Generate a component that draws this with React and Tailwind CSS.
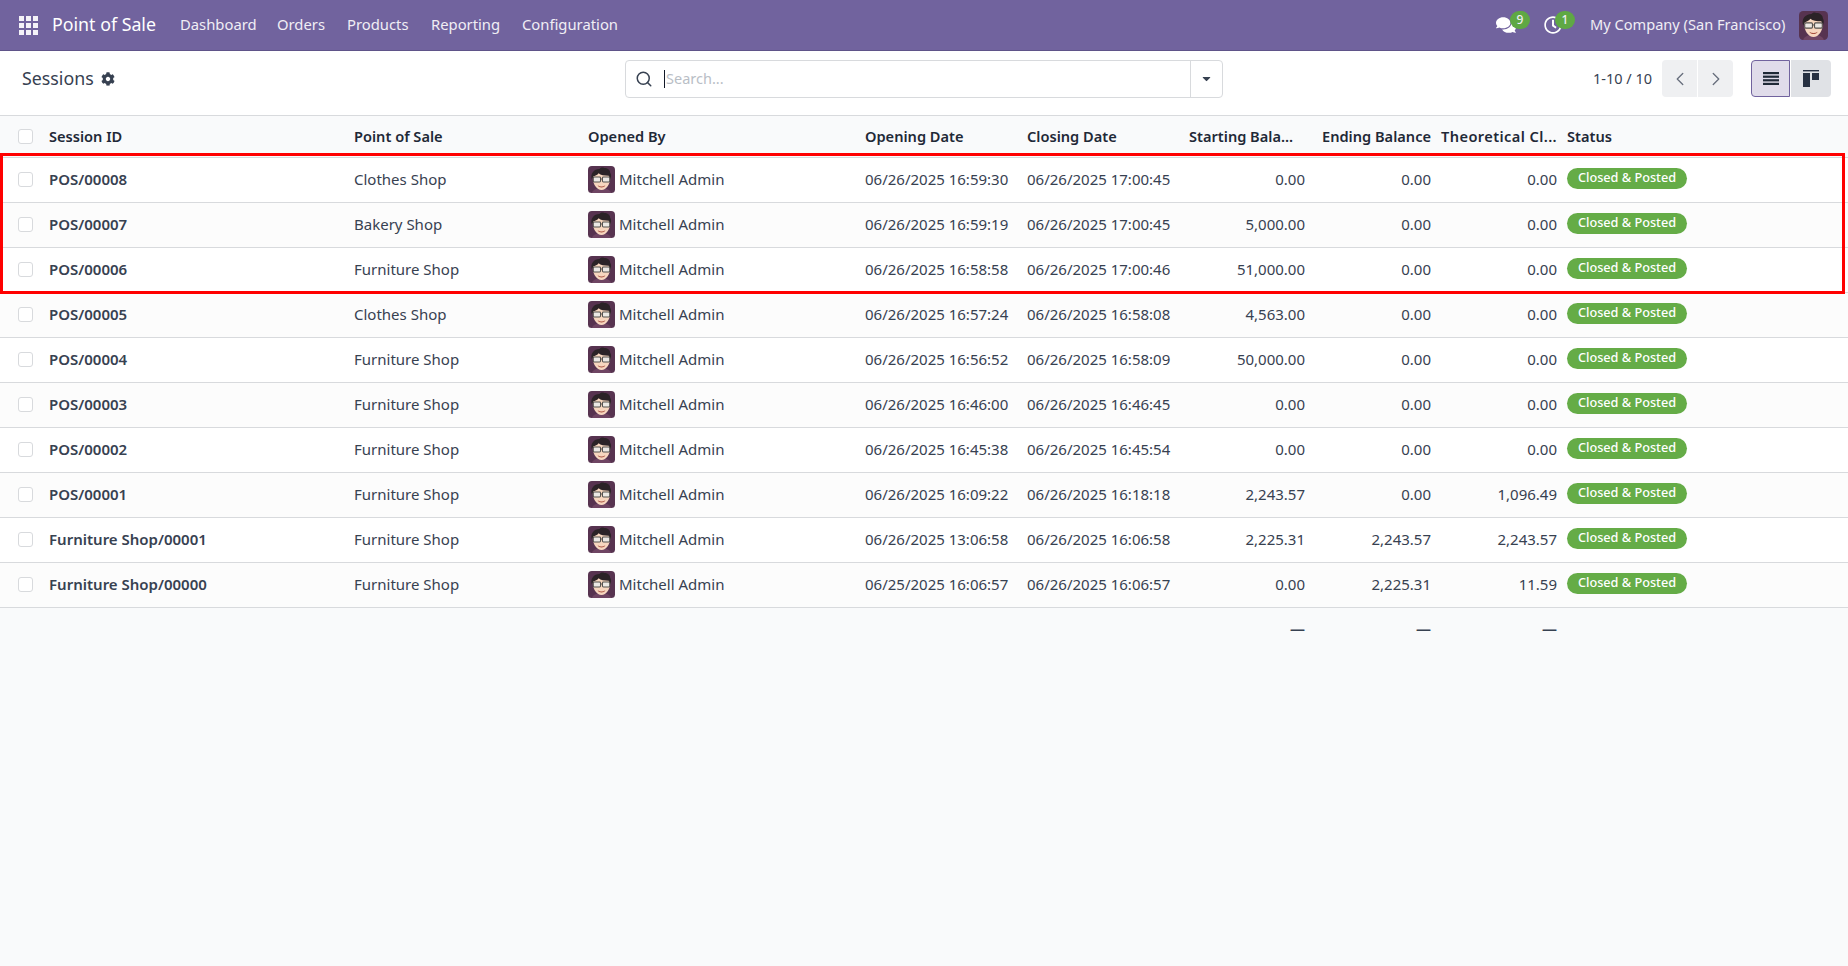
import { ChevronLeft, ChevronRight, Search } from "lucide-react"
import { FaCaretDown, FaCog, FaComments, FaRegClock } from "react-icons/fa"

const rows = [
  ["POS/00008", "Clothes Shop", "06/26/2025 16:59:30", "06/26/2025 17:00:45", "0.00", "0.00", "0.00"],
  ["POS/00007", "Bakery Shop", "06/26/2025 16:59:19", "06/26/2025 17:00:45", "5,000.00", "0.00", "0.00"],
  ["POS/00006", "Furniture Shop", "06/26/2025 16:58:58", "06/26/2025 17:00:46", "51,000.00", "0.00", "0.00"],
  ["POS/00005", "Clothes Shop", "06/26/2025 16:57:24", "06/26/2025 16:58:08", "4,563.00", "0.00", "0.00"],
  ["POS/00004", "Furniture Shop", "06/26/2025 16:56:52", "06/26/2025 16:58:09", "50,000.00", "0.00", "0.00"],
  ["POS/00003", "Furniture Shop", "06/26/2025 16:46:00", "06/26/2025 16:46:45", "0.00", "0.00", "0.00"],
  ["POS/00002", "Furniture Shop", "06/26/2025 16:45:38", "06/26/2025 16:45:54", "0.00", "0.00", "0.00"],
  ["POS/00001", "Furniture Shop", "06/26/2025 16:09:22", "06/26/2025 16:18:18", "2,243.57", "0.00", "1,096.49"],
  ["Furniture Shop/00001", "Furniture Shop", "06/26/2025 13:06:58", "06/26/2025 16:06:58", "2,225.31", "2,243.57", "2,243.57"],
  ["Furniture Shop/00000", "Furniture Shop", "06/25/2025 16:06:57", "06/26/2025 16:06:57", "0.00", "2,225.31", "11.59"],
]

const menu = ["Dashboard", "Orders", "Products", "Reporting", "Configuration"]

function Avatar({ className }) {
  return (
    <svg viewBox="0 0 28 28" className={className}>
      <rect width="28" height="28" rx="4" fill="#573350" />
      <path d="M4 28c1-3 4-5 10-5s9 2 10 5z" fill="#6f4563" />
      <path d="M5 12c0-4 4-6 9-6s9 2 9 6c0 7-4 13-9 13S5 19 5 12z" fill="#f7d6bf" />
      <path d="M4 14C2 8 6 3 12 3c1-1.500 3-2 5-1 3 0 6 2 6 5 1.500 2 1 5 0 7l-1.500-4C17 10 13 9.500 11 7.500 10 9.500 7 10 5.500 11z" fill="#2b2327" />
      <rect x="5.500" y="11.500" width="7.500" height="5" rx="1" fill="#ece8e4" stroke="#55524f" strokeWidth="1.100" />
      <rect x="15" y="11.500" width="7.500" height="5" rx="1" fill="#ece8e4" stroke="#55524f" strokeWidth="1.100" />
      <path d="M13 13.500h2" stroke="#55524f" strokeWidth="1" />
      <path d="M10 20c2.500 1.800 5.500 1.800 8 0-1 3-7 3-8 0z" fill="#a8503f" />
    </svg>
  )
}

function Checkbox() {
  return <div className="w-[15px] h-[15px] rounded-[3px] border border-[#d8dadd] bg-white" />
}

export default function App() {
  return (
    <div className="h-screen bg-[#f9fafb] text-[#374151] text-[15px] font-['Noto_Sans',sans-serif] overflow-hidden">
      <nav className="h-[51px] bg-[#71639e] border-b border-[#5f5389] flex items-center text-white">
        <div className="grid grid-cols-3 gap-[2px] w-[19px] h-[19px] ml-[19px]">
          {Array.from({ length: 9 }).map((_, i) => <div key={i} className="bg-[#f4f2f8]" />)}
        </div>
        <span className="ml-[14px] text-[17.8px] w-[128px] pb-[1px]">Point of Sale</span>
        <div className="flex text-[#f0eef5] text-[14.8px] pb-[2px]">
          {menu.map((m, i) => (
            <a key={i} className={["w-[97px]", "w-[70px]", "w-[84px]", "w-[91px]", "w-[100px]"][i]}>{m}</a>
          ))}
        </div>
        <div className="ml-auto flex items-center text-[#f0eef5] text-[14.6px]">
          <div className="relative w-[48px] h-[30px] flex items-center">
            <FaComments className="w-[20px] h-[20px] text-white" />
            <span className="absolute left-[14px] top-[1px] w-[20px] h-[18px] rounded-full bg-[#5fa844] text-[12px] font-medium flex items-center justify-center">9</span>
          </div>
          <div className="relative w-[46px] h-[30px] flex items-center">
            <FaRegClock className="w-[18px] h-[18px] text-white" />
            <span className="absolute left-[11px] top-[1px] w-[20px] h-[18px] rounded-full bg-[#5fa844] text-[12px] font-medium flex items-center justify-center">1</span>
          </div>
          <span className="w-[209px] pb-[1px]">My Company (San Francisco)</span>
          <Avatar className="w-[29px] h-[29px] mr-[20px]" />
        </div>
      </nav>

      <div className="h-[65px] bg-white border-b border-[#d8dadd] flex items-center pb-[9px] text-[14.5px]">
        <div className="flex items-center ml-[22px] w-[603px]">
          <span className="text-[17.8px]">Sessions</span>
          <FaCog className="w-[14px] h-[14px] ml-[7px] text-[#374151]" />
        </div>
        <div className="w-[598px] h-[38px] rounded-[4px] border border-[#d8dadd] flex items-center">
          <Search className="w-[18px] h-[18px] ml-[9px] text-[#374151]" strokeWidth={2} />
          <div className="w-px h-[18px] bg-[#111827] ml-[11px]" />
          <span className="text-[#b9bec6] ml-[1px]">Search...</span>
          <div className="ml-auto w-[32px] h-full border-l border-[#d8dadd] flex items-center justify-center">
            <FaCaretDown className="w-[13px] h-[13px] text-[#374151]" />
          </div>
        </div>
        <span className="ml-[370px] w-[69px]">1-10 / 10</span>
        <div className="flex h-[37px] w-[71px] rounded-[4px] overflow-hidden bg-[#eff0f2]">
          <div className="flex-1 flex items-center justify-center border-r border-white">
            <ChevronLeft className="w-[22px] h-[22px] text-[#6b7280]" strokeWidth={1.5} />
          </div>
          <div className="flex-1 flex items-center justify-center">
            <ChevronRight className="w-[22px] h-[22px] text-[#6b7280]" strokeWidth={1.5} />
          </div>
        </div>
        <div className="flex h-[37px] ml-[18px]">
          <div className="w-[39px] rounded-l-[4px] bg-[#e0dcea] border border-[#71639e] flex items-center justify-center">
            <svg viewBox="0 0 16 13" className="w-[16px] h-[13px]" fill="#1f2937">
              <rect y="0" width="16" height="2.200" />
              <rect y="3.600" width="16" height="2.200" />
              <rect y="7.200" width="16" height="2.200" />
              <rect y="10.800" width="16" height="2.200" />
            </svg>
          </div>
          <div className="w-[40px] ml-px rounded-r-[4px] bg-[#e0e2e6] flex items-center justify-center">
            <svg viewBox="0 0 16 17" className="w-[16px] h-[17px]" fill="#273142">
              <rect x="0" y="0" width="16" height="1.400" />
              <rect x="0" y="3" width="7" height="14" />
              <rect x="9" y="3" width="7" height="7" />
            </svg>
          </div>
        </div>
      </div>

      <div className="relative">
        <table className="w-full table-fixed border-collapse">
          <colgroup>
            <col className="w-[44px]" />
            <col className="w-[305px]" />
            <col className="w-[234px]" />
            <col className="w-[277px]" />
            <col className="w-[162px]" />
            <col className="w-[162px]" />
            <col className="w-[126px]" />
            <col className="w-[126px]" />
            <col className="w-[126px]" />
            <col />
          </colgroup>
          <thead>
            <tr className="h-[41px] border-b border-[#d8dadd] text-[#1f2937] text-left text-[14.6px]">
              <th className="pl-[18px]"><Checkbox /></th>
              <th className="px-[5px] pt-[2px] font-semibold">Session ID</th>
              <th className="px-[5px] pt-[2px] font-semibold">Point of Sale</th>
              <th className="px-[5px] pt-[2px] font-semibold">Opened By</th>
              <th className="px-[5px] pt-[2px] font-semibold">Opening Date</th>
              <th className="px-[5px] pt-[2px] font-semibold">Closing Date</th>
              <th className="px-[5px] pt-[2px] font-semibold">Starting Bala...</th>
              <th className="px-[5px] pt-[2px] font-semibold text-right">Ending Balance</th>
              <th className="px-[5px] pt-[2px] font-semibold text-right tracking-[0.4px]">Theoretical Cl...</th>
              <th className="px-[5px] pt-[2px] font-semibold">Status</th>
            </tr>
          </thead>
          <tbody>
            {rows.map((r, i) => (
              <tr key={i} className={`h-[45px] border-b border-[#d8dadd] ${i % 2 === 0 ? "bg-white" : "bg-[#fcfcfc]"}`}>
                <td className="pl-[18px]"><Checkbox /></td>
                <td className="px-[5px] font-semibold">{r[0]}</td>
                <td className="px-[5px]">{r[1]}</td>
                <td className="px-[5px]">
                  <div className="flex items-center gap-[4px]">
                    <Avatar className="w-[27px] h-[27px]" />
                    <span>Mitchell Admin</span>
                  </div>
                </td>
                <td className="px-[5px]">{r[2]}</td>
                <td className="px-[5px]">{r[3]}</td>
                <td className="px-[5px] text-right">{r[4]}</td>
                <td className="px-[5px] text-right">{r[5]}</td>
                <td className="px-[5px] text-right">{r[6]}</td>
                <td className="px-[5px]">
                  <span className="inline-flex items-center justify-center w-[120px] h-[21px] rounded-full bg-[#65ac47] text-white text-[12.7px] font-medium mb-[5px]">Closed &amp; Posted</span>
                </td>
              </tr>
            ))}
          </tbody>
          <tfoot>
            <tr className="h-[42px] text-right font-bold">
              <td colSpan={6} />
              <td className="px-[5px]">—</td>
              <td className="px-[5px]">—</td>
              <td className="px-[5px]">—</td>
              <td />
            </tr>
          </tfoot>
        </table>
        <div className="absolute left-0 top-[37px] w-[1845px] h-[141px] border-[3px] border-[#ff0000] pointer-events-none" />
      </div>
    </div>
  )
}
